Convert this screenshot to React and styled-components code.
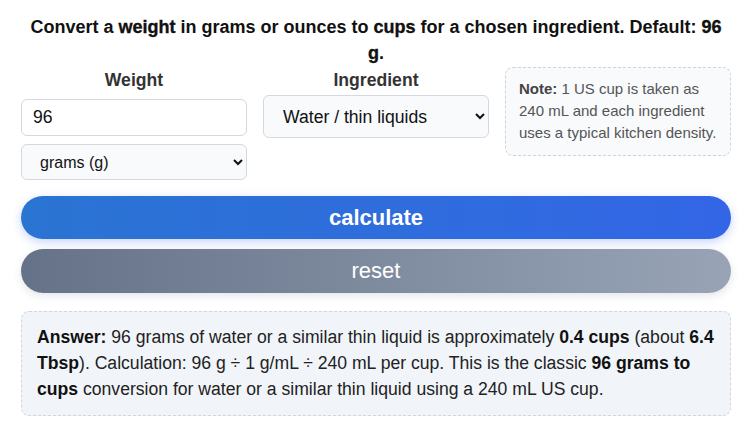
import React, { useState } from 'react';
import styled, { createGlobalStyle } from 'styled-components';

const GlobalStyle = createGlobalStyle`
  * { box-sizing: border-box; }
  body {
    margin: 0;
    background: #ffffff;
    font-family: "Liberation Sans", Arial, sans-serif;
    color: #222;
  }
`;

const Page = styled.div`
  width: 752px;
  padding: 14px 21px 0 21px;
`;

const Title = styled.h2`
  margin: 0 0 1px 0;
  padding: 0 4px;
  font-size: 18px;
  line-height: 26px;
  font-weight: 700;
  text-align: center;
  color: #111;

  strong {
    font-weight: 700;
    -webkit-text-stroke: 0.35px #111;
  }
`;

const Row = styled.div`
  display: grid;
  grid-template-columns: 1fr 1fr 1fr;
  gap: 16px;
  align-items: start;
`;

const Column = styled.div`
  display: flex;
  flex-direction: column;
`;

const Label = styled.label`
  display: block;
  text-align: center;
  font-weight: 700;
  font-size: 17.6px;
  color: #333;
  line-height: 22px;
  margin: 2px 0 ${p => p.$gap}px 0;
`;

const Input = styled.input`
  width: 100%;
  height: 37px;
  padding: 0 11px;
  font-size: 17.6px;
  font-family: inherit;
  color: #111;
  border: 1px solid #d5d8de;
  border-radius: 6px;
  background: #fff;
  outline: none;
`;

const Select = styled.select`
  width: 100%;
  height: ${p => p.$h}px;
  margin-top: ${p => p.$top}px;
  padding: 0 8px 0 ${p => p.$pl}px;
  font-size: ${p => p.$fs}px;
  font-family: inherit;
  color: #111;
  border: 1px solid #d5d8de;
  border-radius: 6px;
  background: #f8fafc;
  outline: none;
`;

const Note = styled.div`
  border: 1px dashed #cfd4dc;
  border-radius: 8px;
  background: #f8fafc;
  padding: 10px 10px 11px 13px;
  font-size: 15px;
  line-height: 22px;
  color: #555;

  strong {
    color: #444;
  }
`;

const Button = styled.button`
  display: block;
  width: 100%;
  height: ${p => p.$h}px;
  border: none;
  border-radius: 22px;
  font-family: inherit;
  font-size: 22px;
  color: #fff;
  cursor: pointer;
  font-weight: ${p => (p.$primary ? 700 : 400)};
  background: ${p =>
    p.$primary
      ? 'linear-gradient(90deg, #2a74d2 0%, #3366e6 100%)'
      : 'linear-gradient(90deg, #657288 0%, #98a4b6 100%)'};
  box-shadow: ${p =>
    p.$primary ? '0 3px 10px rgba(51, 102, 230, 0.28)' : '0 3px 8px rgba(100, 116, 139, 0.18)'};
  margin-top: ${p => p.$top}px;
`;

const Answer = styled.div`
  margin-top: 18px;
  border: 1px dashed #cfd6e0;
  border-radius: 8px;
  background: #f1f5f9;
  padding: 12px 14px 13px 15px;
  font-size: 17.6px;
  line-height: 26px;
  color: #222;

  strong {
    color: #111;
  }
`;

export default function App() {
  const [weight, setWeight] = useState('96');
  return (
    <>
      <GlobalStyle />
      <Page>
        <Title>
          Convert a <strong>weight</strong> in grams or ounces to <strong>cups</strong> for a chosen ingredient. Default: <strong>96 g</strong>.
        </Title>
        <Row>
          <Column>
            <Label $gap={8}>Weight</Label>
            <Input value={weight} onChange={e => setWeight(e.target.value)} />
            <Select $h={36} $top={8} $pl={14} $fs={16} defaultValue="g">
              <option value="g">grams (g)</option>
              <option value="oz">ounces (oz)</option>
            </Select>
          </Column>
          <Column>
            <Label $gap={4}>Ingredient</Label>
            <Select $h={43} $top={0} $pl={15} $fs={17.6} defaultValue="water">
              <option value="water">Water / thin liquids</option>
              <option value="flour">All-purpose flour</option>
              <option value="sugar">Granulated sugar</option>
            </Select>
          </Column>
          <Note>
            <strong>Note:</strong> 1 US cup is taken as 240 mL and each ingredient uses a typical kitchen density.
          </Note>
        </Row>
        <Button $primary $h={43} $top={16}>calculate</Button>
        <Button $h={44} $top={10}>reset</Button>
        <Answer>
          <strong>Answer:</strong> 96 grams of water or a similar thin liquid is approximately <strong>0.4 cups</strong> (about <strong>6.4 Tbsp</strong>). Calculation: 96 g ÷ 1 g/mL ÷ 240 mL per cup. This is the classic <strong>96 grams to cups</strong> conversion for water or a similar thin liquid using a 240 mL US cup.
        </Answer>
      </Page>
    </>
  );
}
